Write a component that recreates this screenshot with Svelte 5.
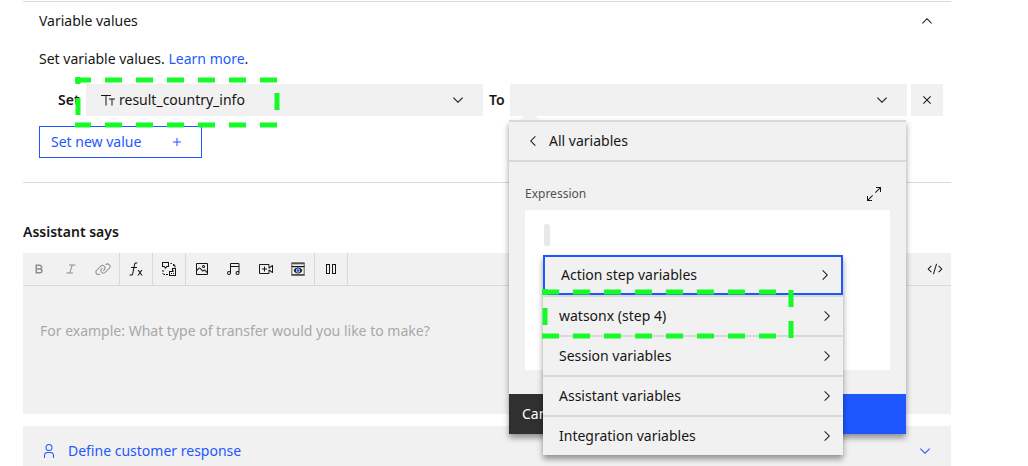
<script>
  const icons = {
    down: 'M16 22 6 12l1.4-1.4 8.6 8.6 8.6-8.6L26 12z',
    up: 'm16 10 10 10-1.4 1.4-8.6-8.6-8.6 8.6L6 20z',
    right: 'M22 16 12 26l-1.4-1.4 8.6-8.6-8.6-8.6L12 6z',
    left: 'm10 16 10-10 1.4 1.4-8.6 8.6 8.6 8.6L20 26z',
    close: 'M24 9.4 22.6 8 16 14.6 9.4 8 8 9.4l6.6 6.6L8 22.6 9.4 24l6.6-6.6 6.6 6.6 1.4-1.4-6.6-6.6z',
    add: 'M17 15V8h-2v7H8v2h7v7h2v-7h7v-2z',
    user: 'M16 4a5 5 0 1 1-5 5 5 5 0 0 1 5-5m0-2a7 7 0 1 0 7 7 7 7 0 0 0-7-7zM26 30h-2v-5a5 5 0 0 0-5-5h-6a5 5 0 0 0-5 5v5H6v-5a7 7 0 0 1 7-7h6a7 7 0 0 1 7 7z',
    expand: 'M20 2v2h6.6L18 12.6l1.4 1.4L28 5.4V12h2V2zM14 19.4 12.6 18 4 26.6V20H2v10h10v-2H5.4z',
    text: 'M23 27V15h-5v-2h12v2h-5v12zM11 27V8H2V6h20v2h-9v19z',
    bold: 'M18.25 25H9V7h8.5a5.25 5.25 0 0 1 4 8.65A5.25 5.25 0 0 1 18.25 25ZM12 22h6.23a2.25 2.25 0 1 0 0-4.5H12Zm0-7.5h5.5a2.25 2.25 0 1 0 0-4.5H12Z',
    italic: 'M25 9V7H12v2h5.14l-4.37 14H7v2h13v-2h-5.14l4.37-14z',
    link: 'M29.25 6.76a6 6 0 0 0-8.5 0l1.42 1.42a4 4 0 1 1 5.67 5.67l-8 8a4 4 0 1 1-5.67-5.66l1.41-1.42-1.41-1.42-1.42 1.42a6 6 0 0 0 0 8.5A6 6 0 0 0 17 25a6 6 0 0 0 4.27-1.76l8-8a6 6 0 0 0-.02-8.48ZM4.19 24.82a4 4 0 0 1 0-5.67l8-8a4 4 0 0 1 5.67 0A3.94 3.94 0 0 1 19 14a4 4 0 0 1-1.17 2.85L15.71 19l1.42 1.42 2.12-2.12a6 6 0 0 0-8.51-8.51l-8 8a6 6 0 0 0 0 8.51A6 6 0 0 0 7 28a6.07 6.07 0 0 0 4.28-1.76l-1.42-1.42a4 4 0 0 1-5.67 0Z',
    fx: 'M18.5 3v2.2h-2.2c-1.3 0-1.9.7-2.2 2L13.2 12H18v2h-5.2l-2.3 11.4C10 27.9 8.8 29 6.6 29H3v-2h3.4c1.2 0 1.8-.5 2.1-1.9L10.7 14H6v-2h5.1l1-5.1C12.6 4.3 13.8 3 16.2 3zM29 18h-2.4L24 21.7 21.4 18H19l3.8 5.4L18.6 29H21l3-4 3 4h2.4l-4.2-5.6z',
    swap: 'M2 2h14v10h-4l-3 4-3-4H2zm2 2v6h3l2 2.7L11 10h3V4zM19 4h3v2h-3zM24 6h3v3h2v4h-2v-3h-3zM3 18h2v4H3zM3 24h2v2h3v2H5v-2H3zM10 26h4v2h-4zM22 14h8v16H16V20h6zm2 2v6h-6v6h10V16zM20 24h2v2h-2zM24 24h2v2h-2zM24 19h2v2h-2z',
    image: 'M19 14a3 3 0 1 0-3-3 3 3 0 0 0 3 3Zm0-4a1 1 0 1 1-1 1 1 1 0 0 1 1-1ZM26 4H6a2 2 0 0 0-2 2v20a2 2 0 0 0 2 2h20a2 2 0 0 0 2-2V6a2 2 0 0 0-2-2Zm0 22H6v-6l5-5 5.59 5.59a2 2 0 0 0 2.82 0L21 19l5 5Zm0-4.83-3.59-3.59a2 2 0 0 0-2.82 0L18 19.17l-5.59-5.59a2 2 0 0 0-2.82 0L6 17.17V6h20Z',
    music: 'M25 4H10a2 2 0 0 0-2 2v14.56A3.96 3.96 0 0 0 6 20a4 4 0 1 0 4 4V12h15v8.56A3.95 3.95 0 0 0 23 20a4 4 0 1 0 4 4V6a2 2 0 0 0-2-2ZM6 26a2 2 0 1 1 2-2 2 2 0 0 1-2 2Zm17 0a2 2 0 1 1 2-2 2 2 0 0 1-2 2ZM10 6h15v4H10Z',
    video: 'M18 15h-4v-4h-2v4H8v2h4v4h2v-4h4zM21 26H4a2 2 0 0 1-2-2V8a2 2 0 0 1 2-2h17a2 2 0 0 1 2 2v4.06l5.42-3.87A1 1 0 0 1 30 9v14a1 1 0 0 1-1.58.81L23 19.94V24a2 2 0 0 1-2 2ZM4 8v16h17v-6a1 1 0 0 1 1.58-.81L28 21.06V10.94l-5.42 3.87A1 1 0 0 1 21 14V8Z',
    pause: 'M6 6h8v20H6zm2 2v16h4V8zM18 6h8v20h-8zm2 2v16h4V8z',
    code: 'm31 16-7 7-1.41-1.41L28.17 16l-5.58-5.59L24 9zM1 16l7-7 1.41 1.41L3.83 16l5.58 5.59L8 23zM18.15 5.48l1.94.52-6.24 20.48-1.94-.52z'
  };

  const groups = [
    [
      { id: 'bold', label: 'Bold', muted: true },
      { id: 'italic', label: 'Italic', muted: true },
      { id: 'link', label: 'Link', muted: true }
    ],
    [{ id: 'fx', label: 'Insert variable' }],
    [{ id: 'swap', label: 'Response type' }],
    [
      { id: 'image', label: 'Image' },
      { id: 'music', label: 'Audio' },
      { id: 'video', label: 'Video' },
      { id: 'iframe', label: 'Embedded page' }
    ],
    [{ id: 'pause', label: 'Pause' }]
  ];

  const categories = [
    'Action step variables',
    'watsonx (step 4)',
    'Session variables',
    'Assistant variables',
    'Integration variables'
  ];
</script>

{#snippet icon(id)}
  <svg class="icon" viewBox="0 0 32 32" aria-hidden="true">
    {#if id === 'iframe'}
      <path d="M2 4h28v25H2z" fill="#8d8d8d" />
      <path d="M5 7h22v3H5zM5 13h22v13H5z" fill="#f1f1f1" />
      <path d="M3 3h26v2H3zM3 10h26v2H3zM3 27h26v2H3z" />
      <path d="M16 13c-4 0-7 2.5-8.5 6 1.5 3.5 4.5 6 8.5 6s7-2.5 8.5-6c-1.5-3.5-4.5-6-8.5-6z" />
      <circle cx="16" cy="19" r="4.5" fill="#a6c8ff" />
      <circle cx="16" cy="19" r="2.5" fill="#1f57ff" />
    {:else}
      <path d={icons[id]} />
    {/if}
  </svg>
{/snippet}

<main>
  <section class="values">
    <button class="head" aria-expanded="true">
      <span>Variable values</span>
      {@render icon('up')}
    </button>
    <div class="content">
      <p>Set variable values. <a href="#learn">Learn more</a>.</p>
      <div class="row">
        <label for="target">Set</label>
        <div class="field">
          <span class="lead">{@render icon('text')}</span>
          <select id="target" class="with-lead">
            <option>result_country_info</option>
          </select>
          <span class="arrow">{@render icon('down')}</span>
          <svg class="mark mark-target" width="205" height="52" aria-hidden="true">
            <path d="M0 4h202" stroke-dasharray="16 14 17 14 17 14 17 14 17 14 17 14 17 14" />
            <path d="M0 49h203" stroke-dasharray="16 14 17 14 17 14 17 14 17 14 17 14 17 14" />
            <path d="M3 1v38" stroke-dasharray="7 14 17 14" />
            <path d="M202 17v17" />
          </svg>
        </div>
        <label for="source">To</label>
        <div class="field">
          <select id="source"><option></option></select>
          <span class="arrow">{@render icon('down')}</span>

          <div class="popover">
            <button class="back">{@render icon('left')}<span>All variables</span></button>
            <div class="editor">
              <div class="editor-head">
                <span>Expression</span>
                <button class="bare" aria-label="Expand">{@render icon('expand')}</button>
              </div>
              <div class="canvas">
                <span class="cursor"></span>
                <ul class="menu">
                  {#each categories as category, i}
                    <li>
                      <button class:focused={i === 0}>
                        <span>{category}</span>
                        {@render icon('right')}
                      </button>
                      {#if i === 1}
                        <svg class="mark mark-step" width="254" height="52" aria-hidden="true">
                          <path d="M0 4h236" stroke-dasharray="17 14" />
                          <path d="M0 48h236" stroke-dasharray="17 14" />
                          <path d="M3 1v36" stroke-dasharray="6 13 17 14" />
                          <path d="M249 2v49" stroke-dasharray="17 14" />
                        </svg>
                      {/if}
                    </li>
                  {/each}
                </ul>
              </div>
            </div>
            <div class="actions">
              <button class="cancel">Cancel</button>
              <button class="apply" aria-label="Apply"></button>
            </div>
          </div>
        </div>
        <button class="remove" aria-label="Remove">{@render icon('close')}</button>
      </div>
      <button class="new"><span>Set new value</span>{@render icon('add')}</button>
    </div>
  </section>

  <h2><label for="says">Assistant says</label></h2>
  <div class="textbox">
    <div class="toolbar">
      {#each groups as group}
        <div class="group">
          {#each group as tool}
            <button class="tool" class:muted={tool.muted} aria-label={tool.label}>{@render icon(tool.id)}</button>
          {/each}
        </div>
      {/each}
      <button class="tool code" aria-label="Code view">{@render icon('code')}</button>
    </div>
    <textarea id="says" placeholder="For example: What type of transfer would you like to make?"></textarea>
  </div>

  <button class="response">
    {@render icon('user')}
    <span>Define customer response</span>
    {@render icon('down')}
  </button>
</main>

<style>
  :global(body) {
    margin: 0;
    background: #fff;
  }
  main {
    box-sizing: border-box;
    height: 100vh;
    overflow: hidden;
    padding: 1px 77px 0 23px;
    color: #161616;
    font: 14px/18px 'Noto Sans', sans-serif;
  }
  main * {
    box-sizing: border-box;
  }
  button,
  select,
  textarea {
    margin: 0;
    padding: 0;
    border: 0;
    border-radius: 0;
    background: none;
    color: inherit;
    font: inherit;
    text-align: left;
  }
  .icon {
    display: block;
    flex: none;
    width: 16px;
    height: 16px;
    fill: currentColor;
  }
  .values {
    border: solid #d9d9d9;
    border-width: 1px 0;
    padding-bottom: 24px;
  }
  .head {
    display: flex;
    align-items: center;
    justify-content: space-between;
    width: 100%;
    height: 38px;
    padding: 0 16px;
  }
  .content {
    padding: 10px 8px 0 16px;
  }
  p {
    margin: 0 0 16px;
  }
  a {
    color: #1f57ff;
    text-decoration: none;
  }
  .row {
    display: grid;
    grid-template-columns: 22px minmax(0, 1fr) 15px minmax(0, 1fr) 34px;
    column-gap: 6px;
    align-items: center;
    margin: 0 0 10px;
    padding-left: 19px;
  }
  .row {
    grid-template-columns: 22px minmax(0, 1fr) 15px minmax(0, 1fr) 30px;
  }
  .row > label,
  h2 {
    font-weight: 600;
  }
  .field {
    position: relative;
    height: 32px;
  }
  select {
    appearance: none;
    display: block;
    width: 100%;
    height: 32px;
    background: #f1f1f1;
  }
  .with-lead {
    padding-left: 33px;
  }
  .lead,
  .arrow {
    position: absolute;
    top: 8px;
    pointer-events: none;
  }
  .lead {
    left: 14px;
  }
  .arrow {
    right: 17px;
  }
  .remove {
    display: grid;
    place-items: center;
    height: 32px;
    margin-left: -2px;
    background: #f1f1f1;
  }
  .new {
    display: flex;
    align-items: center;
    justify-content: space-between;
    width: 163px;
    height: 32px;
    padding: 0 16px 0 11px;
    border: 1px solid #1f57ff;
    color: #1f57ff;
  }
  .mark {
    position: absolute;
    z-index: 3;
    fill: none;
    stroke: #16fb27;
    stroke-width: 5px;
    pointer-events: none;
  }
  .mark-target {
    top: -8px;
    left: -11px;
  }
  .mark-step {
    top: -7px;
    left: -1px;
  }
  .popover {
    position: absolute;
    z-index: 2;
    top: 36px;
    right: 1px;
    left: -1px;
    background: #f1f1f1;
    box-shadow: 0 4px 6px rgb(0 0 0 / 40%);
  }
  .popover::before {
    content: '';
    position: absolute;
    top: -4px;
    left: 10px;
    width: 22px;
    height: 4px;
    background: #f1f1f1;
    clip-path: polygon(25% 0, 75% 0, 100% 100%, 0 100%);
  }
  .back {
    display: flex;
    align-items: center;
    gap: 8px;
    width: 100%;
    height: 42px;
    padding: 0 16px;
    border: solid #d9d9d9;
    border-width: 2px 0;
  }
  .editor {
    padding: 16px 16px 24px;
  }
  .editor-head {
    display: flex;
    align-items: center;
    justify-content: space-between;
    height: 32px;
    padding-right: 8px;
    color: #525252;
    font-size: 12px;
  }
  .editor-head .icon {
    color: #161616;
  }
  .canvas {
    position: relative;
    height: 160px;
    padding: 14px 19px;
    background: #fff;
  }
  .cursor {
    display: block;
    width: 6px;
    height: 22px;
    border-radius: 2px;
    background: #e8e8e8;
  }
  .menu {
    position: absolute;
    top: 45px;
    left: 18px;
    width: 300px;
    margin: 0;
    padding: 0;
    list-style: none;
    background: #f1f1f1;
    box-shadow: 0 4px 6px rgb(0 0 0 / 40%);
  }
  .menu li {
    position: relative;
  }
  .menu button {
    display: flex;
    align-items: center;
    justify-content: space-between;
    width: 100%;
    height: 40px;
    padding: 0 8px 0 16px;
    border-top: 2px solid #d9d9d9;
  }
  .menu .focused {
    border: 2px solid #1f57ff;
  }
  .actions {
    display: grid;
    grid-template-columns: 1fr 1fr;
    height: 40px;
    color: #fff;
  }
  .cancel {
    padding-left: 13px;
    background: #303030;
  }
  .apply {
    background: #1f57ff;
  }
  h2 {
    margin: 40px 0 12px;
    font-size: 14px;
  }
  h2 label {
    display: block;
  }
  .textbox {
    background: #f1f1f1;
  }
  .toolbar {
    display: flex;
    height: 33px;
    border-bottom: 1px solid #d9d9d9;
  }
  .group {
    display: flex;
    border-right: 1px solid #d9d9d9;
  }
  .tool {
    display: grid;
    place-items: center;
    width: 32px;
    height: 32px;
  }
  .muted {
    color: #8d8d8d;
  }
  .code {
    margin-left: auto;
  }
  textarea {
    display: block;
    width: 100%;
    height: 128px;
    padding: 36px 17px 0;
    resize: none;
  }
  textarea::placeholder {
    color: #a8a8a8;
    opacity: 1;
  }
  .response {
    display: grid;
    grid-template-columns: 16px 1fr 16px;
    column-gap: 11px;
    align-items: center;
    width: 100%;
    height: 50px;
    margin-top: 12px;
    padding: 0 18px;
    background: #f1f1f1;
    color: #1f57ff;
  }
</style>
